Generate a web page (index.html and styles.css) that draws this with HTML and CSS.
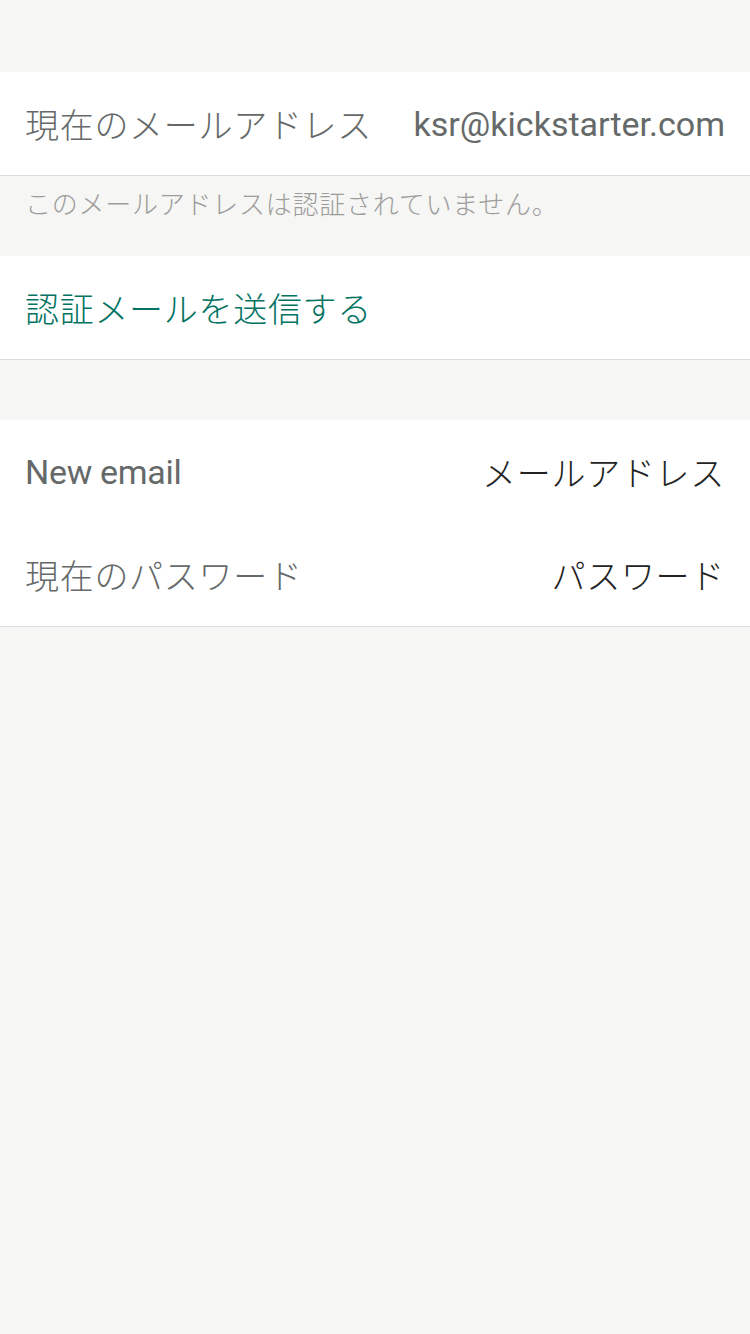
FILE: index.html
```html
<!DOCTYPE html>
<html lang="ja">
<head>
<meta charset="utf-8">
<link rel="stylesheet" href="styles.css">
</head>
<body>
<div class="page">
  <section class="group">
    <div class="row">
      <span class="label">現在のメールアドレス</span>
      <span class="value email">ksr@kickstarter.com</span>
    </div>
  </section>
  <p class="footer-note">このメールアドレスは認証されていません。</p>
  <section class="group">
    <div class="row">
      <span class="action">認証メールを送信する</span>
    </div>
  </section>
  <section class="group spaced">
    <div class="row">
      <span class="label latin">New email</span>
      <span class="value">メールアドレス</span>
    </div>
    <div class="row">
      <span class="label">現在のパスワード</span>
      <span class="value">パスワード</span>
    </div>
  </section>
</div>
</body>
</html>
```
FILE: styles.css
```css
html, body {
  margin: 0;
  padding: 0;
  background: #f6f6f4;
}
body {
  font-family: "Noto Sans CJK JP", "Noto Sans", sans-serif;
  font-weight: 300;
  width: 750px;
  height: 1334px;
}
.page {
  padding-top: 72px;
}
.group {
  background: #ffffff;
  border-bottom: 1px solid #dcdcdc;
}
.spaced {
  margin-top: 60px;
}
.row {
  height: 103px;
  display: flex;
  align-items: center;
  justify-content: space-between;
  padding: 0 25px;
}
.label {
  font-size: 34px;
  color: #656969;
  letter-spacing: 0.7px;
}
.value {
  font-size: 34px;
  color: #232323;
  letter-spacing: 0.7px;
}
.email {
  color: #656969;
  font-family: "Roboto", "Noto Sans", sans-serif;
  font-weight: 400;
  letter-spacing: 0;
}
.label.latin {
  font-family: "Roboto", sans-serif;
  font-weight: 400;
  letter-spacing: -0.3px;
}
.footer-note {
  margin: 0;
  height: 80px;
  box-sizing: border-box;
  padding: 0 25px 28px;
  display: flex;
  align-items: center;
  font-size: 26px;
  letter-spacing: 0.75px;
  color: #9c9c9c;
}
.action {
  font-size: 34px;
  letter-spacing: 0.7px;
  color: #037362;
}
```
